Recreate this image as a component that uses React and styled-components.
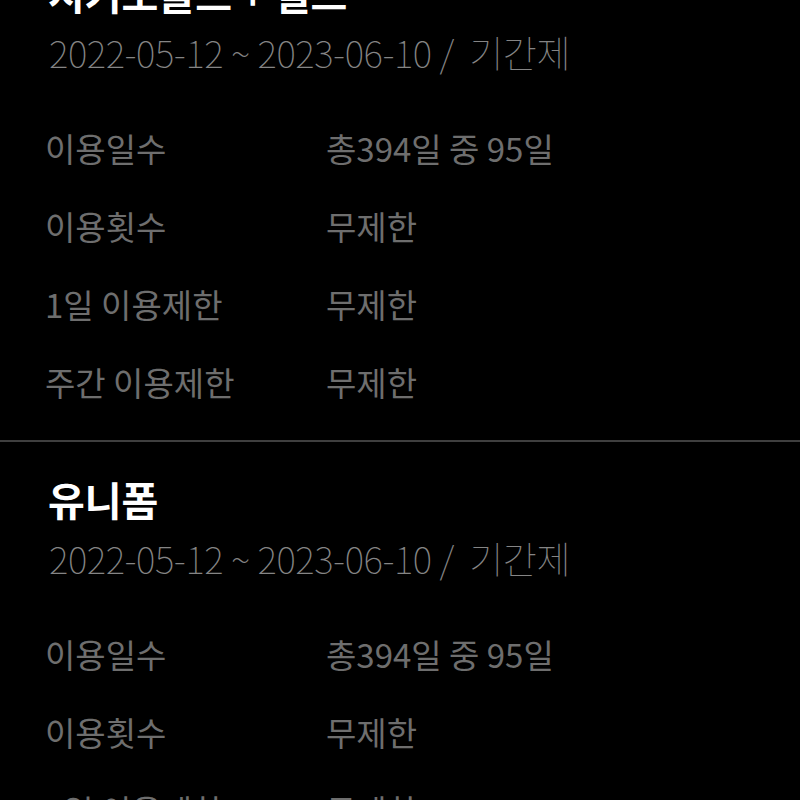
import React from 'react';
import styled, { createGlobalStyle } from 'styled-components';

const GlobalStyle = createGlobalStyle`
	html, body {
		margin: 0;
		padding: 0;
		background: #000;
	}
	body {
		font-family: "Noto Sans CJK KR", "Noto Sans", sans-serif;
		overflow: hidden;
	}
`;

const Page = styled.div`
	background: #000;
	min-height: 800px;
	margin-top: -66px;
`;

const Section = styled.section`
	padding: 35px 48px 19px 48px;
	& + & {
		border-top: 2px solid #3f3f3f;
		padding-top: 33px;
	}
`;

const Title = styled.h2`
	margin: 0;
	font-size: 40px;
	line-height: 48px;
	font-weight: 700;
	color: #fff;
	letter-spacing: 0;
`;

const Period = styled.p`
	margin: 0 0 22px 1px;
	font-size: 37px;
	line-height: 70px;
	font-weight: 100;
	color: #858585;
	letter-spacing: -0.4px;
	white-space: pre;
`;

const InfoRow = styled.div`
	display: grid;
	grid-template-columns: 281px 1fr;
	font-size: 33px;
	line-height: 78px;
	color: #6e6e6e;
	margin-left: -3px;
`;

const Label = styled.span``;

const Value = styled.span``;

const passes = [
	{
		name: '시커모골프 + 필드',
		period: '2022-05-12 ~ 2023-06-10 /  기간제',
		info: [
			['이용일수', '총394일 중 95일'],
			['이용횟수', '무제한'],
			['1일 이용제한', '무제한'],
			['주간 이용제한', '무제한'],
		],
	},
	{
		name: '유니폼',
		period: '2022-05-12 ~ 2023-06-10 /  기간제',
		info: [
			['이용일수', '총394일 중 95일'],
			['이용횟수', '무제한'],
			['1일 이용제한', '무제한'],
			['주간 이용제한', '무제한'],
		],
	},
];

const App = () => {
	return (
		<Page>
			<GlobalStyle />
			{passes.map((p, i) => (
				<Section key={i}>
					<Title>{p.name}</Title>
					<Period>{p.period}</Period>
					{p.info.map(([k, v]) => (
						<InfoRow key={k}>
							<Label>{k}</Label>
							<Value>{v}</Value>
						</InfoRow>
					))}
				</Section>
			))}
		</Page>
	);
};

export default App;
